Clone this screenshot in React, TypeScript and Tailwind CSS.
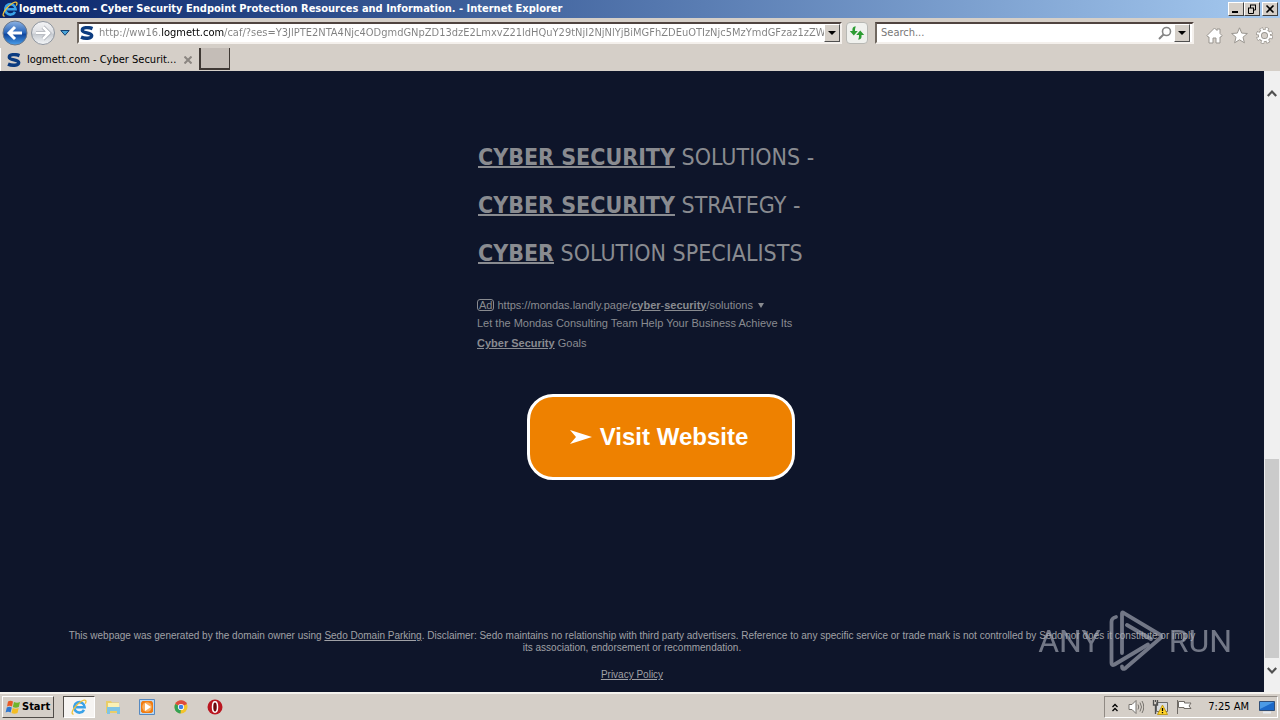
import type { ReactNode } from "react"

const URL_TEXT =
  "http://ww16.logmett.com/caf/?ses=Y3JlPTE2NTA4Njc4ODgmdGNpZD13dzE2LmxvZ21ldHQuY29tNjI2NjNlYjBiMGFhZDEuOTIzNjc5MzYmdGFzaz1zZWFyY"

function IeIcon({ className }: { className: string }) {
  return (
    <svg viewBox="0 0 16 16" className={className} aria-hidden="true">
      <path
        d="M13 10.800a5.200 5.200 0 1 1 .6-2.600H4.800"
        fill="none"
        stroke="#3aa2e8"
        strokeWidth="2.600"
      />
      <path
        d="M2.600 15C0 15.500 1 11.500 4.500 7.500S13.500-.500 14.800 1.700c.5.900 0 2-.6 3"
        fill="none"
        stroke="#f0c23a"
        strokeWidth="1.300"
      />
    </svg>
  )
}

function SedoIcon() {
  return (
    <svg viewBox="0 0 14 14" className="size-3.5 shrink-0" aria-hidden="true">
      <path
        d="M12.500 2.600C9 1.200 2.300.900 2.300 4.200c0 3.300 9.400 2.100 9.400 5.400 0 3.400-7 3.200-10.700 1.500"
        fill="none"
        stroke="#0c3c80"
        strokeWidth="3.400"
      />
    </svg>
  )
}

function Caret() {
  return (
    <svg viewBox="0 0 8 4" className="h-1 w-2" aria-hidden="true">
      <path d="M0 0h8L4 4z" fill="#000" />
    </svg>
  )
}

function CaptionButton({ label, children }: { label: string; children: ReactNode }) {
  return (
    <button
      aria-label={label}
      className="flex h-3.5 w-4 items-center justify-center border border-t-white border-r-[#404040] border-b-[#404040] border-l-white bg-[#d5cfc8]"
    >
      <svg viewBox="0 0 12 10" className="h-2.5 w-3" fill="none" stroke="#000">
        {children}
      </svg>
    </button>
  )
}

function TitleBar() {
  return (
    <header className="flex h-[18px] shrink-0 items-center bg-linear-to-r from-[#0a246a] to-[#a6caf0] px-0.5">
      <IeIcon className="size-4 shrink-0" />
      <h1 className="ml-px flex-1 truncate text-[11px] leading-4 font-bold text-white">
        logmett.com - Cyber Security Endpoint Protection Resources and Information. - Internet
        Explorer
      </h1>
      <CaptionButton label="Minimize">
        <path d="M2 8h6" strokeWidth="2" />
      </CaptionButton>
      <CaptionButton label="Restore">
        <path d="M4 1h6M4.500 1v3M9.500 1v5H8M2 4h6M2.500 4v5.500h5V4" />
      </CaptionButton>
      <div className="w-0.5" />
      <CaptionButton label="Close">
        <path d="M2.500 1.500l7 7M9.500 1.500l-7 7" strokeWidth="1.600" />
      </CaptionButton>
    </header>
  )
}

function NavButtons() {
  return (
    <div className="flex items-center">
      <button aria-label="Back">
        <svg viewBox="0 0 26 26" className="size-[26px]">
          <defs>
            <linearGradient id="back" x2="0" y2="1">
              <stop offset="0" stopColor="#8fb4e4" />
              <stop offset=".5" stopColor="#2562b8" />
              <stop offset=".55" stopColor="#10459c" />
              <stop offset="1" stopColor="#4aa0ec" />
            </linearGradient>
          </defs>
          <circle cx="13" cy="13" r="12" fill="url(#back)" stroke="#6a7688" />
          <path d="M20 13H8M13 7l-6 6 6 6" fill="none" stroke="#fff" strokeWidth="3" />
        </svg>
      </button>
      <button aria-label="Forward" className="ml-0.5">
        <svg viewBox="0 0 26 26" className="size-[26px]">
          <defs>
            <linearGradient id="forward" x2="0" y2="1">
              <stop offset="0" stopColor="#f4f4f6" />
              <stop offset=".5" stopColor="#dcdee2" />
              <stop offset=".55" stopColor="#c6cad0" />
              <stop offset="1" stopColor="#f6f8fa" />
            </linearGradient>
          </defs>
          <circle cx="13" cy="13" r="11.500" fill="url(#forward)" stroke="#8f959e" />
          <path d="M6 13h12M13 7l6 6-6 6" fill="none" stroke="#a4a8b0" strokeWidth="4" />
          <path d="M6 13h12M13 7l6 6-6 6" fill="none" stroke="#fff" strokeWidth="2.600" />
        </svg>
      </button>
      <button aria-label="Recent pages" className="ml-1">
        <svg viewBox="0 0 10 6" className="h-1.5 w-2.5">
          <path d="M.8.500h8.400L5 5.300z" fill="#4aa5d8" stroke="#123f70" />
        </svg>
      </button>
    </div>
  )
}

function DropButton({ label }: { label: string }) {
  return (
    <button
      aria-label={label}
      className="flex h-[18px] w-4 shrink-0 items-center justify-center border border-t-white border-r-[#505050] border-b-[#505050] border-l-white bg-[#d5cfc8]"
    >
      <Caret />
    </button>
  )
}

function ToolBar() {
  return (
    <div className="flex h-[30px] shrink-0 items-center pr-[7px] pl-0.5">
      <NavButtons />
      <div className="ml-[7px] flex h-[22px] flex-1 items-center border-2 border-t-[#504440] border-r-[#f4f0ec] border-b-[#f4f0ec] border-l-[#706860] bg-white pl-px">
        <SedoIcon />
        {/* the host name stands out from the rest of the address */}
        <input
          aria-label="Address"
          defaultValue={URL_TEXT}
          className="ml-[5px] h-4 min-w-0 flex-1 bg-[linear-gradient(90deg,#808080_62px,#000_62px,#000_125px,#808080_125px)] bg-clip-text text-[11px] text-transparent outline-none"
        />
        <DropButton label="Show address list" />
      </div>
      <button
        aria-label="Refresh"
        className="ml-1 flex size-[22px] items-center justify-center rounded-sm border border-[#b8b8b4] bg-[#f0f1ee]"
      >
        <svg viewBox="0 0 16 14" className="h-3.5 w-4">
          <path d="M7 .5C3.500.500 3.300 2.500 3.500 5H.8l4 4.500L8.800 5H6c0-2 0-3 1-4.500z" fill="#2c9c32" />
          <path d="M9 13.500c3.500 0 3.700-2 3.500-4.500h2.700l-4-4.500-4 4.500H10c0 2 0 3-1 4.500z" fill="#2c9c32" />
        </svg>
      </button>
      <div className="ml-[7px] flex h-[22px] w-[319px] shrink-0 items-center border-2 border-t-[#504440] border-r-[#f4f0ec] border-b-[#f4f0ec] border-l-[#706860] bg-white pr-0.5">
        <input
          type="search"
          aria-label="Search"
          placeholder="Search..."
          className="ml-1 h-4 min-w-0 flex-1 text-[11px] outline-none placeholder:text-[#777777]"
        />
        <button aria-label="Search" className="mr-0.5">
          <svg
            viewBox="0 0 14 14"
            className="size-3.5"
            fill="none"
            stroke="#858585"
            strokeWidth="2"
          >
            <circle cx="8.500" cy="5.500" r="4" strokeWidth="1.600" />
            <path d="M5.500 8.500L1 13" />
          </svg>
        </button>
        <DropButton label="Search options" />
      </div>
      <div className="ml-3 flex items-center gap-2 pt-1">
        <button aria-label="Home">
          <svg viewBox="0 0 17 17" className="size-[17px]" fill="#fff" stroke="#99958f">
            <path d="M1 8.500L8.500 1 11 3.500V2h3v4.500l2 2-1 1.500h-1v6h-4v-5H7v5H3v-6H2z" />
          </svg>
        </button>
        <button aria-label="Favorites">
          <svg viewBox="0 0 17 17" className="size-[17px]" fill="#fff" stroke="#99958f">
            <path d="M8.500.800l2.200 5.300 5.700.400-4.400 3.700 1.400 5.600-4.900-3-4.900 3L5 10.200.600 6.500l5.700-.4z" />
          </svg>
        </button>
        <button aria-label="Tools">
          <svg viewBox="0 0 17 17" className="size-[17px]" fill="none">
            <circle cx="8.500" cy="8.500" r="6.500" stroke="#99958f" strokeWidth="4" strokeDasharray="3.100 2" />
            <circle cx="8.500" cy="8.500" r="4.600" fill="#d5cfc8" stroke="#99958f" strokeWidth="4" />
            <circle cx="8.500" cy="8.500" r="6.500" stroke="#fff" strokeWidth="2.600" strokeDasharray="2.100 3" strokeDashoffset="-.5" />
            <circle cx="8.500" cy="8.500" r="4.600" stroke="#fff" strokeWidth="2.200" />
          </svg>
        </button>
      </div>
    </div>
  )
}

function TabBar() {
  return (
    <div className="flex h-[23px] shrink-0 items-start">
      <div className="flex h-[23px] w-[199px] items-center border-l border-white pl-1.5">
        <SedoIcon />
        <span className="ml-1.5 flex-1 truncate text-[11px] leading-4">
          logmett.com - Cyber Securit...
        </span>
        <button aria-label="Close tab" className="mr-[7px]">
          <svg viewBox="0 0 8 8" className="size-2" stroke="#8b8681" strokeWidth="2">
            <path d="M.5.500l7 7M7.500.500l-7 7" />
          </svg>
        </button>
      </div>
      <button
        aria-label="New tab"
        className="h-[22px] w-[31px] border-r border-b-2 border-l-2 border-[#3e3834] bg-[#c4bdb7]"
      />
    </div>
  )
}

const headings = [
  { strong: "CYBER SECURITY", rest: "SOLUTIONS -" },
  { strong: "CYBER SECURITY", rest: "STRATEGY -" },
  { strong: "CYBER", rest: "SOLUTION SPECIALISTS" },
]

function Ad() {
  return (
    <section className="w-[368px] text-[#898b90]">
      <h2 className="pl-px font-['DejaVu_Sans_Condensed','DejaVu_Sans',sans-serif] text-[23px] leading-[48px]">
        {headings.map((line) => (
          <a key={line.rest} href="#ad" className="block whitespace-nowrap">
            <b className="underline decoration-2 underline-offset-1">{line.strong}</b> {line.rest}
          </a>
        ))}
      </h2>
      <div className="mt-[19px] text-[11px] leading-5">
        <p className="flex h-[17px] items-center">
          <span className="mr-[3px] rounded-[3px] border border-[#898b90] px-px leading-[10px]">
            Ad
          </span>
          <a href="#ad">
            https://mondas.landly.page/<b className="underline">cyber</b>-
            <b className="underline">security</b>/solutions
          </a>
          <svg viewBox="0 0 6 5" className="mt-0.5 ml-[5px] h-[5px] w-1.5" aria-hidden="true">
            <path d="M0 0h6L3 5z" fill="#898b90" />
          </svg>
        </p>
        <p className="w-[330px]">
          Let the Mondas Consulting Team Help Your Business Achieve Its{" "}
          <b className="underline">Cyber Security</b> Goals
        </p>
      </div>
      <a
        href="#visit"
        className="mx-auto mt-[41px] flex h-[86px] w-[268px] items-center justify-center rounded-[26px] border-3 border-white bg-[#ee8100] pr-1 text-2xl font-bold text-white"
      >
        <svg viewBox="0 0 22 14" className="mr-2 h-3.5 w-[22px]" aria-hidden="true">
          <path d="M0 0l22 7L0 14l6-7z" fill="#fff" />
        </svg>
        Visit Website
      </a>
    </section>
  )
}

function Watermark() {
  return (
    <div className="absolute right-8 bottom-5 flex items-center font-[Roboto,sans-serif] text-[32px] leading-none text-[#a8acb8] opacity-65">
      <span>ANY</span>
      <svg
        viewBox="0 0 56 62"
        className="mx-1.5 h-[62px] w-14"
        fill="none"
        stroke="currentColor"
        strokeWidth="3.800"
        strokeLinejoin="round"
        strokeLinecap="round"
      >
        <path d="M15 43V3.500q0-1.500 1.500-.7L53.500 25q2 1.500 0 3L18 58.500q-3 1.500-3-2M20 15l24 14" />
        <path d="M9 7Q4.500 8 4.500 12v41q0 3 3 1.500L41 34.500" />
      </svg>
      <span>RUN</span>
    </div>
  )
}

function ScrollBar() {
  return (
    <div className="flex w-4 shrink-0 flex-col items-center bg-[#f0f0f0]">
      <button aria-label="Scroll up" className="flex h-11 items-center">
        <svg viewBox="0 0 10 8" className="h-2 w-2.5" fill="none" stroke="#505050" strokeWidth="2.200">
          <path d="M.8 7L5 2.500 9.200 7" />
        </svg>
      </button>
      <div className="flex-1" />
      <div className="h-[32%] w-3.5 bg-[#cbcbcb]" />
      <button aria-label="Scroll down" className="flex h-[34px] items-center pb-2">
        <svg viewBox="0 0 10 8" className="h-2 w-2.5" fill="none" stroke="#505050" strokeWidth="2.200">
          <path d="M.8 1L5 5.500 9.200 1" />
        </svg>
      </button>
    </div>
  )
}

function Page() {
  return (
    <div className="flex min-h-0 flex-1">
      <div className="relative flex flex-1 flex-col overflow-hidden bg-[#0e152a] font-['Liberation_Sans',Arial,sans-serif]">
        <main className="flex flex-1 justify-center pt-[62px] pl-[58px]">
          <Ad />
        </main>
        <footer className="px-16 pb-[11px] text-center text-[10px] leading-3 text-[#a0a1a6]">
          <p>
            This webpage was generated by the domain owner using{" "}
            <a href="#parking" className="underline">
              Sedo Domain Parking
            </a>
            . Disclaimer: Sedo maintains no relationship with third party advertisers. Reference to
            any specific service or trade mark is not controlled by Sedo nor does it constitute or
            imply its association, endorsement or recommendation.
          </p>
          <a href="#privacy" className="mt-[15px] inline-block underline">
            Privacy Policy
          </a>
        </footer>
        <Watermark />
      </div>
      <ScrollBar />
    </div>
  )
}

function TaskBar() {
  return (
    <footer className="flex h-7 shrink-0 items-center border-t-2 border-[#f4f2ee] pr-0.5 pl-0.5">
      <button className="flex h-[22px] w-[52px] items-center border border-t-white border-r-[#504c48] border-b-[#504c48] border-l-white pl-0.5 text-[11px] font-bold">
        <svg viewBox="0 0 16 16" className="mr-px size-4" aria-hidden="true">
          <path d="M3 2.500q2.500-1.500 5 0L7 7.500q-2.500-1.500-5 0z" fill="#e95a25" />
          <path d="M9 3q3 1.500 6 0l-1.200 5q-3 1.500-6 0z" fill="#6fb52c" />
          <path d="M1.800 8.500q2.500-1.500 5 0l-1.200 5q-2.500-1.500-5 0z" fill="#2f77d0" />
          <path d="M7.700 9q3 1.500 6 0l-1.200 5q-3 1.500-6 0z" fill="#f4bd24" />
        </svg>
        Start
      </button>
      <button
        aria-label="Internet Explorer"
        className="ml-[9px] flex h-[22px] w-8 items-center justify-center border border-t-[#504c48] border-r-white border-b-white border-l-[#504c48] bg-[#f6f4f2]"
      >
        <IeIcon className="size-4" />
      </button>
      <button aria-label="Windows Explorer" className="ml-2.5">
        <svg viewBox="0 0 16 16" className="size-4">
          <path d="M1 2h5l1 1.500h7V14H1z" fill="#e9cd68" />
          <path d="M3 4h11v5H3z" fill="#fbf1b4" />
          <path d="M2 8h13v7h-3v-3H5v3H2z" fill="#80c4e4" />
        </svg>
      </button>
      <button aria-label="Media Player" className="ml-[18px]">
        <svg viewBox="0 0 16 16" className="size-4">
          <path d="M.5.500h15v15H.5z" fill="#b9d7f2" stroke="#5689c0" />
          <path d="M2 3.500L3.500 2h9L14 3.500v9L12.500 14h-9L2 12.500z" fill="#f07c12" />
          <circle cx="8" cy="8" r="4.800" fill="#f9b060" />
          <path d="M6 4l6 4-6 4z" fill="#fff" />
        </svg>
      </button>
      <button aria-label="Chrome" className="ml-[18px]">
        <svg viewBox="0 0 16 16" className="size-4">
          <circle cx="8" cy="8" r="6.500" fill="#f3c42b" />
          <path d="M8 8L2.200 5A6.500 6.500 0 0 1 14 5z" fill="#dd4b3e" />
          <path d="M8 8L2.200 5A6.500 6.500 0 0 0 7.500 14.500z" fill="#33a154" />
          <circle cx="8" cy="8" r="3.100" fill="#fff" />
          <circle cx="8" cy="8" r="2.300" fill="#3f80e8" />
        </svg>
      </button>
      <button aria-label="Opera" className="ml-[18px]">
        <svg viewBox="0 0 16 16" className="size-4">
          <circle cx="8" cy="8" r="7.500" fill="#ba1620" />
          <ellipse cx="8" cy="8" rx="2.500" ry="5.200" fill="#6c080d" stroke="#fff" strokeWidth="1.500" />
        </svg>
      </button>
      <div className="ml-auto flex h-[22px] items-center border border-t-[#908a84] border-r-white border-b-white border-l-[#908a84] pr-0.5 pl-[7px]">
        <button aria-label="Show hidden icons">
          <svg viewBox="0 0 6 9" className="h-[9px] w-1.5" fill="none" stroke="#000" strokeWidth="1.300">
            <path d="M.5 4L3 1.500 5.500 4M.5 8L3 5.500 5.500 8" />
          </svg>
        </button>
        <svg viewBox="0 0 16 16" className="ml-2.5 size-4" fill="#fff" stroke="#77736e">
          <path d="M1 5.500h3L8 1.500v13L4 10.500H1z" />
          <path d="M10 5.500q1.500 2.500 0 5M12 3.500q3 4.500 0 9M14 2q3.500 6 0 12" fill="none" />
        </svg>
        <svg viewBox="0 0 16 16" className="ml-2 size-4">
          <path d="M4.500 3.500h11v9h-11z" fill="#d9dce0" stroke="#6b6b6b" />
          <path d="M1.500 1v5h4V1M3.500 6v9M3.500 1v2" fill="none" stroke="#4f4f4f" strokeWidth="1.300" />
          <path d="M10.500 6l5 9.500h-10z" fill="#ffd32a" stroke="#b98e00" strokeWidth=".8" />
          <path d="M10.500 9v3M10.500 13v1.300" stroke="#000" strokeWidth="1.300" />
        </svg>
        <svg viewBox="0 0 16 16" className="ml-2 size-4" fill="#fff" stroke="#706b66">
          <path d="M1.500 1v14M2.500 2.500h6v1.500h6.500l-2 3 2 2.500H8V8.500H2.500z" />
        </svg>
        <time className="ml-4 text-[11px]">7:25 AM</time>
        <svg viewBox="0 0 16 14" className="ml-2.5 h-3.5 w-4">
          <path d="M.5 1.500h15v9H.5z" fill="#1c69c8" stroke="#304e77" />
          <path d="M1 2h14L1 9z" fill="#4b9ae5" />
          <path d="M4 12.500h8" stroke="#e6eaf0" strokeWidth="2" />
        </svg>
      </div>
    </footer>
  )
}

export default function App() {
  return (
    <div className="flex h-screen flex-col bg-[#d5cfc8] font-['DejaVu_Sans_Condensed','DejaVu_Sans',sans-serif] text-black">
      <TitleBar />
      <ToolBar />
      <TabBar />
      <Page />
      <TaskBar />
    </div>
  )
}
